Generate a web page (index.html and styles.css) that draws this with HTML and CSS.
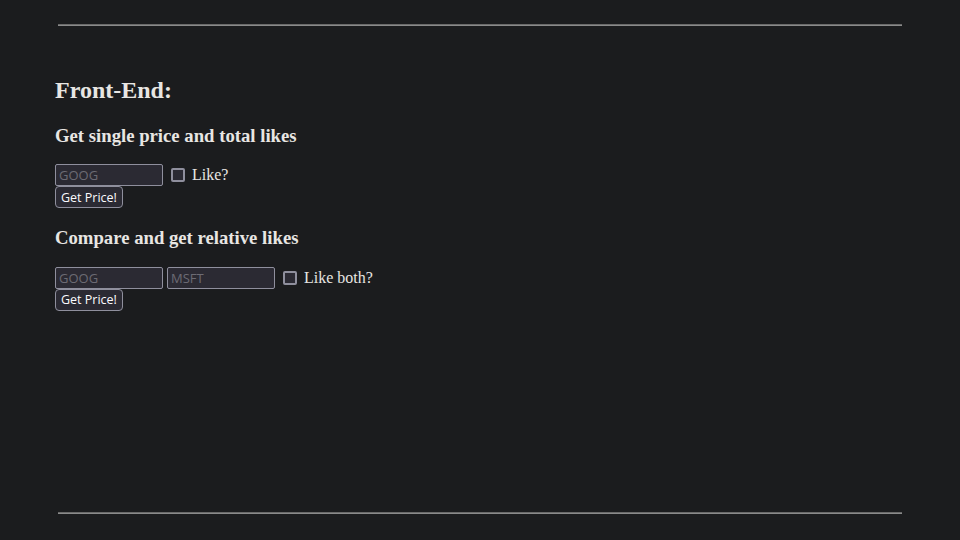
FILE: index.html
```html
<!DOCTYPE html>
<html lang="en">
<head>
<meta charset="utf-8">
<title>Stock Price Checker</title>
<link rel="stylesheet" href="styles.css">
</head>
<body>
<div class="page">
  <hr class="rule">
  <main class="main">
    <h2 class="title">Front-End:</h2>
    <h3 class="sub">Get single price and total likes</h3>
    <form class="form">
      <div class="row">
        <input class="field" type="text" placeholder="GOOG">
        <label class="check"><input class="box" type="checkbox"> Like?</label>
      </div>
      <button class="btn" type="button">Get Price!</button>
    </form>
    <h3 class="sub">Compare and get relative likes</h3>
    <form class="form">
      <div class="row">
        <input class="field" type="text" placeholder="GOOG">
        <input class="field" type="text" placeholder="MSFT">
        <label class="check"><input class="box" type="checkbox"> Like both?</label>
      </div>
      <button class="btn" type="button">Get Price!</button>
    </form>
  </main>
  <hr class="rule">
</div>
</body>
</html>
```
FILE: styles.css
```css
html, body {
  margin: 0;
  padding: 0;
  background: #1b1c1e;
}
body {
  color: #e8e6e3;
  font-family: "Liberation Serif", "Times New Roman", serif;
  font-size: 16px;
}
.page {
  min-height: 540px;
  box-sizing: border-box;
  display: flex;
  flex-direction: column;
  padding: 24px 55px 26px;
}
.rule {
  margin: 0 3px;
  height: 0;
  border: none;
  border-top: 1px solid #6a6a6a;
  border-bottom: 1px solid #8a8a8a;
}
.main {
  flex: 1;
  padding-top: 31px;
}
.title {
  font-size: 24px;
  font-weight: bold;
  margin: 20px 0;
  line-height: 27.6px;
}
.sub {
  font-size: 18.72px;
  font-weight: bold;
  margin: 19px 0 18px;
  line-height: 21.5px;
}
.form {
  margin: 0 0 2px;
}
.row {
  display: flex;
  align-items: center;
  gap: 4px;
  height: 22px;
}
.field {
  box-sizing: border-box;
  width: 108px;
  height: 22px;
  margin: 0;
  padding: 1px 3px;
  background: #2b2a33;
  border: 1px solid #8f8f9d;
  border-radius: 2px;
  color: #fbfbfe;
  font-family: "Open Sans", "Noto Sans", sans-serif;
  font-size: 13px;
}
.field::placeholder {
  color: #6c6b73;
}
.check {
  display: flex;
  align-items: center;
  gap: 7px;
  font-size: 16px;
}
.box {
  appearance: none;
  -webkit-appearance: none;
  box-sizing: border-box;
  width: 14px;
  height: 14px;
  margin: 0 0 0 4px;
  background: #2b2a33;
  border: 2px solid #8f8f9d;
  border-radius: 2px;
}
.btn {
  display: block;
  box-sizing: border-box;
  height: 22px;
  margin: 0;
  padding: 0 5px;
  background: #2b2a33;
  border: 1px solid #8f8f9d;
  border-radius: 4px;
  color: #fbfbfe;
  font-family: "Open Sans", "Noto Sans", sans-serif;
  font-size: 12.5px;
}
```
